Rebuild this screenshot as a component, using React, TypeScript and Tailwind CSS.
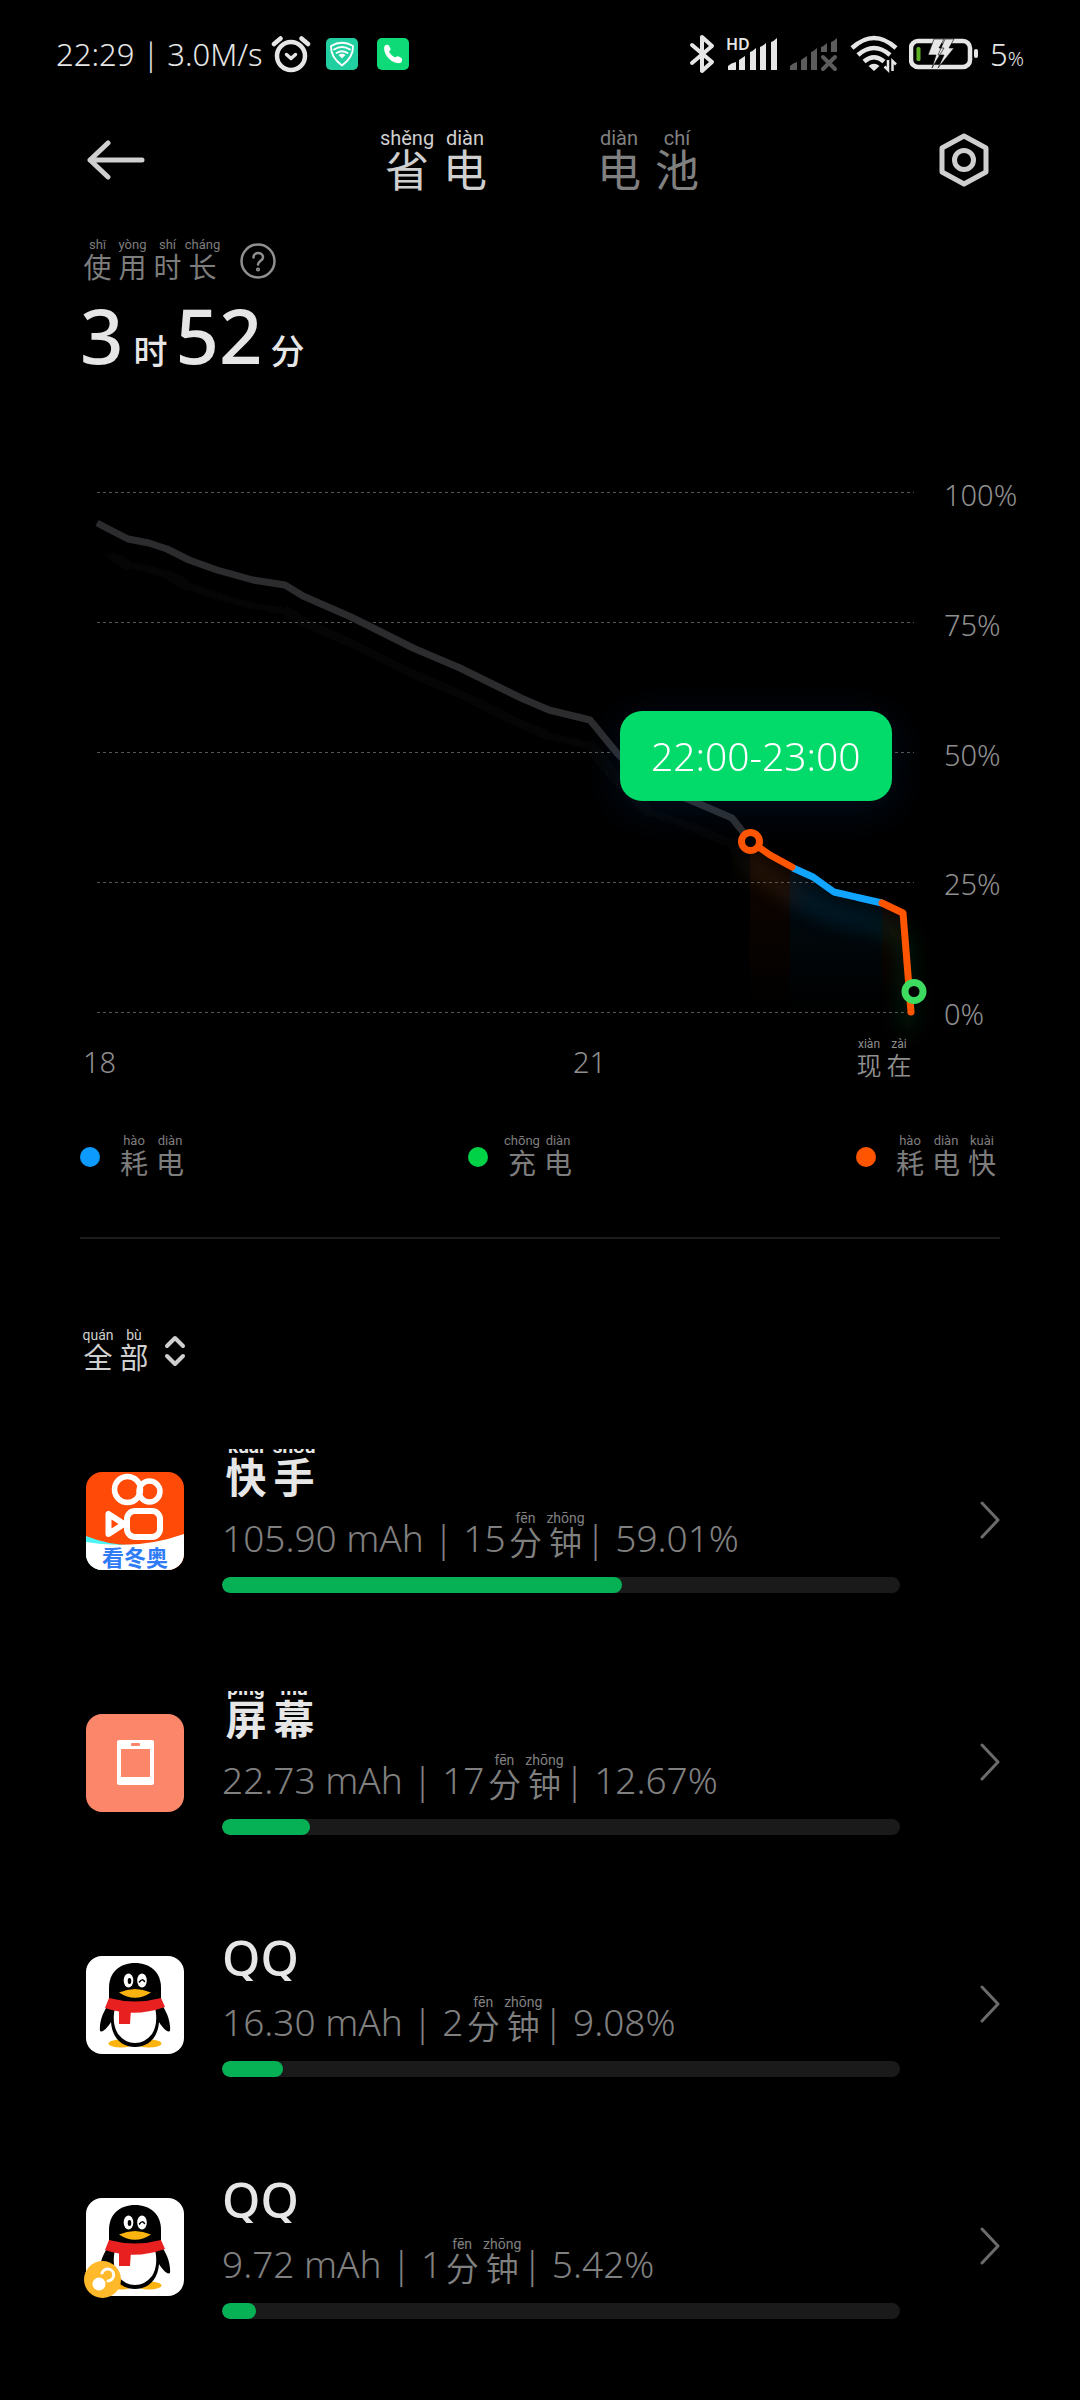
import type { ReactNode } from 'react';

type Syllable = [pinyin: string, hanzi: string];

/* Chinese text with its pinyin reading above every character. */
function Annotated({ text, cell, reading, glyph }: { text: Syllable[]; cell: string; reading: string; glyph: string }) {
  return (
    <span className="flex">
      {text.map(([pinyin, hanzi]) => (
        <span key={pinyin} className={`flex flex-col items-center ${cell}`}>
          <span className={`font-['Roboto',sans-serif] whitespace-nowrap ${reading}`}>{pinyin}</span>
          <span className={glyph}>{hanzi}</span>
        </span>
      ))}
    </span>
  );
}

function AlarmIcon() {
  return (
    <svg viewBox="0 0 40 38" className="h-[38px] w-10" fill="none" stroke="#e6e6e6" strokeLinecap="round" strokeLinejoin="round">
      <circle cx="20" cy="21" r="14" strokeWidth="4.500" />
      <path d="M3 9 9.500 3.500M37 9 30.500 3.500" strokeWidth="4.500" />
      <path d="M15.500 19.500 20 23.500 24.500 19.500" strokeWidth="3.500" />
    </svg>
  );
}

function ShieldAppIcon() {
  return (
    <svg viewBox="0 0 32 32" className="size-8">
      <rect width="32" height="32" rx="5" fill="#22cfa0" />
      <path d="M5 8Q16 1.500 27 8Q27.500 19 16 27.500Q4.500 19 5 8Z" fill="none" stroke="#fff" strokeWidth="1.800" strokeLinejoin="round" />
      <path d="M8 11.500Q16 6.500 24 11.500M10.500 15Q16 11.500 21.500 15" fill="none" stroke="#fff" strokeWidth="1.800" strokeLinecap="round" />
      <path d="M12.500 17Q16 14.500 19.500 17L16 20.500Z" fill="#fff" />
    </svg>
  );
}

function PhoneAppIcon() {
  return (
    <svg viewBox="0 0 32 32" className="size-8">
      <rect width="32" height="32" rx="5" fill="#0edb78" />
      <path d="M8 7.500c1-1 2.500-1 3.500-.5l2 3.500c.3 1-.2 1.800-1.500 3 1 2.500 3.500 4.700 6 6 1-.9 2-1.500 3-1.300l3.500 1.800c.8.500.7 2.500 0 4-1 1.500-3.500 1.300-5.500.8C13 23 8.500 18 7.300 12.500 7 10.500 7 8.800 8 7.500Z" fill="#fff" />
    </svg>
  );
}

function BluetoothIcon() {
  return (
    <svg viewBox="0 0 26 40" className="h-10 w-[26px]" fill="none" stroke="#e6e6e6" strokeWidth="4" strokeLinejoin="round" strokeLinecap="round">
      <path d="M3 11 23 28 13 37V3L23 12 3 29" />
    </svg>
  );
}

function SignalIcon() {
  return (
    <svg viewBox="0 0 52 36" className="h-9 w-[52px] overflow-visible" fill="#e6e6e6">
      <text x="0" y="14" fontSize="16" fontWeight="600" fontFamily="Noto Sans">HD</text>
      <path d="M2 30q3-3 8-4v8H2ZM13 24q3-2 6-4v14h-6ZM24 16q3-1 6-4v22h-6ZM34 11q3-1 6-4v27h-6ZM45 6q3-1 6-4v32h-6Z" />
    </svg>
  );
}

function NoSignalIcon() {
  return (
    <svg viewBox="0 0 50 36" className="h-9 w-[50px]" fill="#5c5c5c">
      <path d="M1 30q3-3 7-4v8H1ZM12 24q3-2 6-4v14h-6ZM22 16q3-1 6-4v22h-6ZM32 11q3-1 6-4v9h-6ZM42 6q3-1 6-4v14h-6Z" />
      <path d="M34 21 46 33M46 21 34 33" stroke="#5c5c5c" strokeWidth="4" strokeLinecap="round" />
    </svg>
  );
}

function WifiIcon() {
  return (
    <svg viewBox="0 0 48 38" className="h-[38px] w-12" fill="none" stroke="#e6e6e6" strokeWidth="4.500">
      <path d="M2 13Q24-7 46 13M8 20Q24 6 40 20M14 26.500Q24 18 34 26.500" />
      <path d="M18.500 31Q24 26.500 29.500 31L24 36Z" fill="#e6e6e6" stroke="none" />
      <path d="M38 25V35L34.500 31.500M42.500 36V26L46 29.500" strokeWidth="2.500" />
    </svg>
  );
}

function BatteryIcon() {
  return (
    <svg viewBox="0 0 70 32" className="h-8 w-[70px]">
      <rect x="2" y="3" width="59" height="26" rx="7" fill="none" stroke="#e6e6e6" strokeWidth="4.500" />
      <rect x="65" y="11" width="4" height="9" rx="2" fill="#e6e6e6" />
      <rect x="7.500" y="9" width="4" height="14" rx="1.500" fill="#5cb024" />
      <path d="M25 1h10L30 10h5L23 30l4-13h-8ZM36 1h9l-5 9h5L29 30l6-13h-6Z" fill="#e6e6e6" stroke="#000" strokeWidth="0.600" />
    </svg>
  );
}

function KuaishouIcon() {
  return (
    <svg viewBox="0 0 98 98" className="size-[98px] rounded-2xl">
      <rect width="98" height="98" fill="#ff4a08" />
      <path d="M0 64Q30 76 60 72L40 98H0Z" fill="#4ff5f5" />
      <path d="M0 70Q50 79 98 62V98H0Z" fill="#fff" />
      <g fill="none" stroke="#fff" strokeLinejoin="round">
        <circle cx="41.500" cy="17.500" r="13" strokeWidth="5.500" />
        <circle cx="63.500" cy="19.500" r="10.500" strokeWidth="5.500" />
        <rect x="41" y="39" width="33" height="26" rx="8" strokeWidth="6" />
        <path d="M22.500 42V62L38 52Z" strokeWidth="6" />
      </g>
      <text x="49" y="94" textAnchor="middle" fontSize="22" fontWeight="700" fill="#2f7cf6" fontFamily="Noto Sans CJK SC">看冬奥</text>
    </svg>
  );
}

function ScreenIcon() {
  return (
    <svg viewBox="0 0 98 98" className="size-[98px] rounded-2xl">
      <rect width="98" height="98" fill="#fb866a" />
      <rect x="31" y="26" width="37" height="45" rx="2" fill="#fff" />
      <rect x="35" y="35" width="29" height="28" fill="#fb866a" />
      <rect x="45" y="29" width="9" height="3" rx="1" fill="#fb866a" />
    </svg>
  );
}

function QQIcon({ badge = false }: { badge?: boolean }) {
  return (
    <svg viewBox="0 0 98 98" className="size-[98px] overflow-visible">
      <rect width="98" height="98" rx="16" fill="#fff" />
      <ellipse cx="35" cy="87.500" rx="12.500" ry="4" fill="#fbb40f" />
      <ellipse cx="63" cy="87.500" rx="12.500" ry="4" fill="#fbb40f" />
      <path d="M23 48C18 54 13 65 14 75 17 77 22 71 25 66C26 82 36 91 49 91S72 82 73 66C76 71 81 77 84 75 85 65 80 54 75 48Z" fill="#000" />
      <path d="M23 46V32C23 16 34 7 49 7S75 16 75 32V46Z" fill="#000" />
      <path d="M29 52H69C71 60 71 70 66 78Q59 87 49 87T32 78C27 70 27 60 29 52Z" fill="#fff" />
      <path d="M23 42Q49 49 75 42L79 51Q48 62 19 52Z" fill="#e8201f" />
      <path d="M33 53H45L44 68H33Z" fill="#e8201f" />
      <ellipse cx="42.500" cy="24.500" rx="4.800" ry="7" fill="#fff" />
      <ellipse cx="56" cy="24.500" rx="4.800" ry="7" fill="#fff" />
      <ellipse cx="43.500" cy="25" rx="1.800" ry="3" fill="#000" />
      <path d="M53.500 26Q56 22 58.500 25.500" fill="none" stroke="#000" strokeWidth="1.500" strokeLinecap="round" />
      <path d="M33 36.500Q49 29.500 65 36.500Q49 47 33 36.500Z" fill="#fbb40f" />
      {badge && (
        <g>
          <circle cx="16.500" cy="81.500" r="18.500" fill="#ffb92b" />
          <circle cx="13" cy="86" r="6.500" fill="#fff" />
          <path d="M16 75A6 6 0 1 1 22 83" fill="none" stroke="#fff" strokeWidth="3" strokeLinecap="round" />
        </g>
      )}
    </svg>
  );
}

function UsageChart() {
  const past =
    '97,523 128,539 149,543 167,549 189,560 217,570 253,580 285,585 303,596 351,617 413,648 460,668 521,698 549,710 590,720 617,753 650,786 690,800 732,818 743,832 750,841';
  return (
    <svg viewBox="97 492 817 521" className="h-auto w-full overflow-visible" role="img" aria-label="电量">
      <defs>
        <linearGradient id="hot" x1="0" y1="0" x2="0" y2="1">
          <stop offset="0" stopColor="#ff5500" stopOpacity="0.07" />
          <stop offset="1" stopColor="#ff5500" stopOpacity="0" />
        </linearGradient>
        <linearGradient id="cool" x1="0" y1="0" x2="0" y2="1">
          <stop offset="0" stopColor="#12a5ff" stopOpacity="0.08" />
          <stop offset="1" stopColor="#12a5ff" stopOpacity="0" />
        </linearGradient>
        <filter id="soft" x="-20%" y="-20%" width="140%" height="150%">
          <feGaussianBlur stdDeviation="10" />
        </filter>
      </defs>
      <path d="M750 841 770 855 790 867V1013H750Z" fill="url(#hot)" />
      <path d="M790 867 813 877 834 892 882 903V1013H790Z" fill="url(#cool)" />
      <path d="M882 903 903 913 911 1013H882Z" fill="url(#hot)" />
      <g filter="url(#soft)" fill="none" strokeWidth="14">
        <polyline points={past} stroke="#2c2c2e" strokeOpacity="0.15" transform="translate(0 26)" />
        <path d="M750 865 793 894" stroke="#ffb040" strokeOpacity="0.12" />
        <path d="M793 894 834 914 882 925" stroke="#12a5ff" strokeOpacity="0.15" />
        <path d="M882 925 905 940 908 1030" stroke="#3ddc60" strokeOpacity="0.12" />
      </g>
      <g stroke="#565656" strokeWidth="1" strokeDasharray="3 3">
        <path d="M97 492.500H914M97 622.500H914M97 752.500H914M97 882.500H914M97 1012.500H914" />
      </g>
      <g fill="none" strokeWidth="7" strokeLinejoin="round">
        <polyline points={past} stroke="#2c2c2e" />
        <polyline points="793,868 813,877 834,892 882,903" stroke="#12a5ff" />
        <polyline points="750,841 770,855 792,867" stroke="#ff5500" strokeLinecap="round" />
        <polyline points="882,903 903,913 911,1012" stroke="#ff5500" strokeLinecap="round" />
      </g>
      <circle cx="750.500" cy="841.500" r="9" fill="#000" stroke="#ff5500" strokeWidth="7" />
      <circle cx="914" cy="991.500" r="9" fill="#000" stroke="#3ddc60" strokeWidth="7" />
    </svg>
  );
}

const legend: { dot: string; text: Syllable[] }[] = [
  { dot: 'bg-[#0c9aff]', text: [['hào', '耗'], ['diàn', '电']] },
  { dot: 'bg-[#00d248]', text: [['chōng', '充'], ['diàn', '电']] },
  { dot: 'bg-[#ff5500]', text: [['hào', '耗'], ['diàn', '电'], ['kuài', '快']] },
];

type Consumer = { id: string; icon: ReactNode; title: string | Syllable[]; charge: string; minutes: string; share: string; fill: number };

const consumers: Consumer[] = [
  { id: 'kuaishou', icon: <KuaishouIcon />, title: [['kuài', '快'], ['shǒu', '手']], charge: '105.90 mAh', minutes: '15', share: '59.01%', fill: 59 },
  { id: 'screen', icon: <ScreenIcon />, title: [['píng', '屏'], ['mù', '幕']], charge: '22.73 mAh', minutes: '17', share: '12.67%', fill: 13 },
  { id: 'qq', icon: <QQIcon />, title: 'QQ', charge: '16.30 mAh', minutes: '2', share: '9.08%', fill: 9 },
  { id: 'qq-clone', icon: <QQIcon badge />, title: 'QQ', charge: '9.72 mAh', minutes: '1', share: '5.42%', fill: 5 },
];

function ConsumerRow({ item }: { item: Consumer }) {
  return (
    <li>
      <button type="button" className="flex h-[242px] w-full items-start text-left">
        <span className="mt-[62px] ml-1.5 shrink-0">{item.icon}</span>
        <span className="mt-[39px] ml-[38px] flex flex-1 flex-col">
          <span className="flex h-12 items-end overflow-hidden text-[#e6e6e6]">
            {typeof item.title === 'string' ? (
              <span className="text-[49px] leading-[48px] font-medium">{item.title}</span>
            ) : (
              <Annotated text={item.title} cell="w-12" reading="text-[19px] leading-[20px] font-bold" glyph="text-[41px] leading-[40px] font-bold" />
            )}
          </span>
          <span className="flex h-[63px] items-end text-[37px] leading-[44px] font-[350] whitespace-pre text-[#808080]">
            {item.charge} | {item.minutes}
            <Annotated text={[['fēn', '分'], ['zhōng', '钟']]} cell="w-10" reading="text-[14px] leading-[16px] font-normal" glyph="text-[33px] leading-[34px]" />
            {' '}| {item.share}
          </span>
          <span className="mt-[17px] h-4 overflow-hidden rounded-full bg-[#1a1a1a]">
            <span className="block h-full rounded-full bg-[#06b055]" style={{ width: `${item.fill}%` }} />
          </span>
        </span>
        <svg viewBox="0 0 20 38" className="mt-[91px] ml-20 h-[38px] w-5 shrink-0" fill="none" stroke="#6b6b6b" strokeWidth="3" strokeLinecap="round" strokeLinejoin="round">
          <path d="M2 2 18 19 2 36" />
        </svg>
      </button>
    </li>
  );
}

export default function App() {
  return (
    <div className="min-h-screen bg-black font-['Noto_Sans','Noto_Sans_CJK_SC',sans-serif] text-[#e6e6e6]">
      <div className="flex h-[108px] items-center pr-[56px] pl-14">
        <span className="text-[31px] font-[350]">22:29 | 3.0M/s</span>
        <span className="ml-2 flex items-center gap-[15px]">
          <AlarmIcon />
          <ShieldAppIcon />
          <span className="ml-1 flex"><PhoneAppIcon /></span>
        </span>
        <span className="ml-auto flex items-center gap-[11px]">
          <BluetoothIcon />
          <SignalIcon />
          <NoSignalIcon />
          <WifiIcon />
          <BatteryIcon />
          <span className="flex items-baseline text-[31px] font-[350]">5<span className="text-[20px]">%</span></span>
        </span>
      </div>

      <header className="flex h-[104px] items-center justify-between pr-[91px] pl-[87px]">
        <button type="button" aria-label="返回">
          <svg viewBox="0 0 58 40" className="h-10 w-[58px]" fill="none" stroke="#cfcfcf" strokeWidth="5" strokeLinecap="round" strokeLinejoin="round">
            <path d="M21 3 3 20 21 37M3 20H55" />
          </svg>
        </button>
        <nav className="flex gap-[96px]">
          <button type="button" className="text-[#cfcfcf]">
            <Annotated text={[['shěng', '省'], ['diàn', '电']]} cell="w-[58px]" reading="text-[20px] leading-[20px]" glyph="text-[44px] leading-[44px]" />
          </button>
          <button type="button" className="text-[#808080]">
            <Annotated text={[['diàn', '电'], ['chí', '池']]} cell="w-[58px]" reading="text-[20px] leading-[20px]" glyph="text-[44px] leading-[44px]" />
          </button>
        </nav>
        <button type="button" aria-label="设置">
          <svg viewBox="0 0 50 54" className="h-[54px] w-[50px]" fill="none" stroke="#cfcfcf" strokeWidth="5" strokeLinejoin="round">
            <path d="M25 3 47 15V39L25 51 3 39V15Z" />
            <circle cx="25" cy="27" r="9.500" />
          </svg>
        </button>
      </header>

      <section className="px-20 pt-[26px]">
        <div className="flex items-center gap-5">
          <span className="text-[#7d7d7d]">
            <Annotated text={[['shǐ', '使'], ['yòng', '用'], ['shí', '时'], ['cháng', '长']]} cell="w-[35px]" reading="text-[13px] leading-[13px]" glyph="text-[28px] leading-[32px]" />
          </span>
          <button type="button" aria-label="帮助">
            <svg viewBox="0 0 36 36" className="size-9" fill="none" stroke="#8f8f8f" strokeWidth="2.500" strokeLinecap="round">
              <circle cx="18" cy="18" r="16.500" />
              <path d="M13.500 14.500C13.500 8.500 23 8.500 23 14.500 23 17.500 18 18 18 21.500" />
              <circle cx="18" cy="26.500" r="0.800" />
            </svg>
          </button>
        </div>
        <h1 className="mt-2 flex items-baseline text-[76px] leading-[88px] font-medium">
          <span>3</span>
          <span className="mr-2 ml-2.5 text-[34px]">时</span>
          <span>52</span>
          <span className="ml-2 text-[34px]">分</span>
        </h1>
      </section>

      <section className="mt-[97px] pr-14 pl-[97px]">
        <div className="flex gap-[30px]">
          <div className="relative flex-1">
            <UsageChart />
            <div className="absolute top-[42%] left-[64%] flex h-[90px] items-center rounded-[22px] bg-[#02da6a] px-[31px] text-[39px] font-[350] text-white shadow-[0_8px_40px_rgba(20,120,255,0.12)]">
              22:00-23:00
            </div>
          </div>
          <div className="-mt-4 -mb-5 flex w-20 flex-col justify-between text-[29px] leading-[38px] font-[350] text-[#8f8f8f]">
            <span>100%</span>
            <span>75%</span>
            <span>50%</span>
            <span>25%</span>
            <span>0%</span>
          </div>
        </div>
        <div className="-ml-3.5 mt-[25px] mr-[110px] grid grid-cols-[490px_1fr_auto] items-end text-[29px] leading-9 font-[350] text-[#8f8f8f]">
          <span>18</span>
          <span>21</span>
          <Annotated text={[['xiàn', '现'], ['zài', '在']]} cell="w-[30px]" reading="text-[12px] leading-[12px] font-normal" glyph="text-[25px] leading-[30px]" />
        </div>
      </section>

      <section className="mx-20 mt-[54px] border-b-2 border-[#1c1c1c] pb-[58px]">
        <ul className="flex justify-between">
          {legend.map((entry, index) => (
            <li key={index} className="flex items-center gap-4 text-[#7d7d7d]">
              <span className={`size-5 rounded-full ${entry.dot}`} />
              <Annotated text={entry.text} cell="w-9" reading="text-[13px] leading-[13px]" glyph="text-[28px] leading-[32px]" />
            </li>
          ))}
        </ul>
      </section>

      <section className="px-20 pt-[89px]">
        <button type="button" className="flex items-center gap-3 text-[#cfcfcf]">
          <Annotated text={[['quán', '全'], ['bù', '部']]} cell="w-9" reading="text-[14px] leading-[14px]" glyph="text-[29px] leading-[32px]" />
          <svg viewBox="0 0 22 32" className="h-8 w-[22px]" fill="none" stroke="#cfcfcf" strokeWidth="4" strokeLinecap="round" strokeLinejoin="round">
            <path d="M3 11 11 3 19 11M3 21 11 29 19 21" />
          </svg>
        </button>
        <ul className="mt-9">
          {consumers.map((item) => (
            <ConsumerRow key={item.id} item={item} />
          ))}
        </ul>
      </section>
    </div>
  );
}
